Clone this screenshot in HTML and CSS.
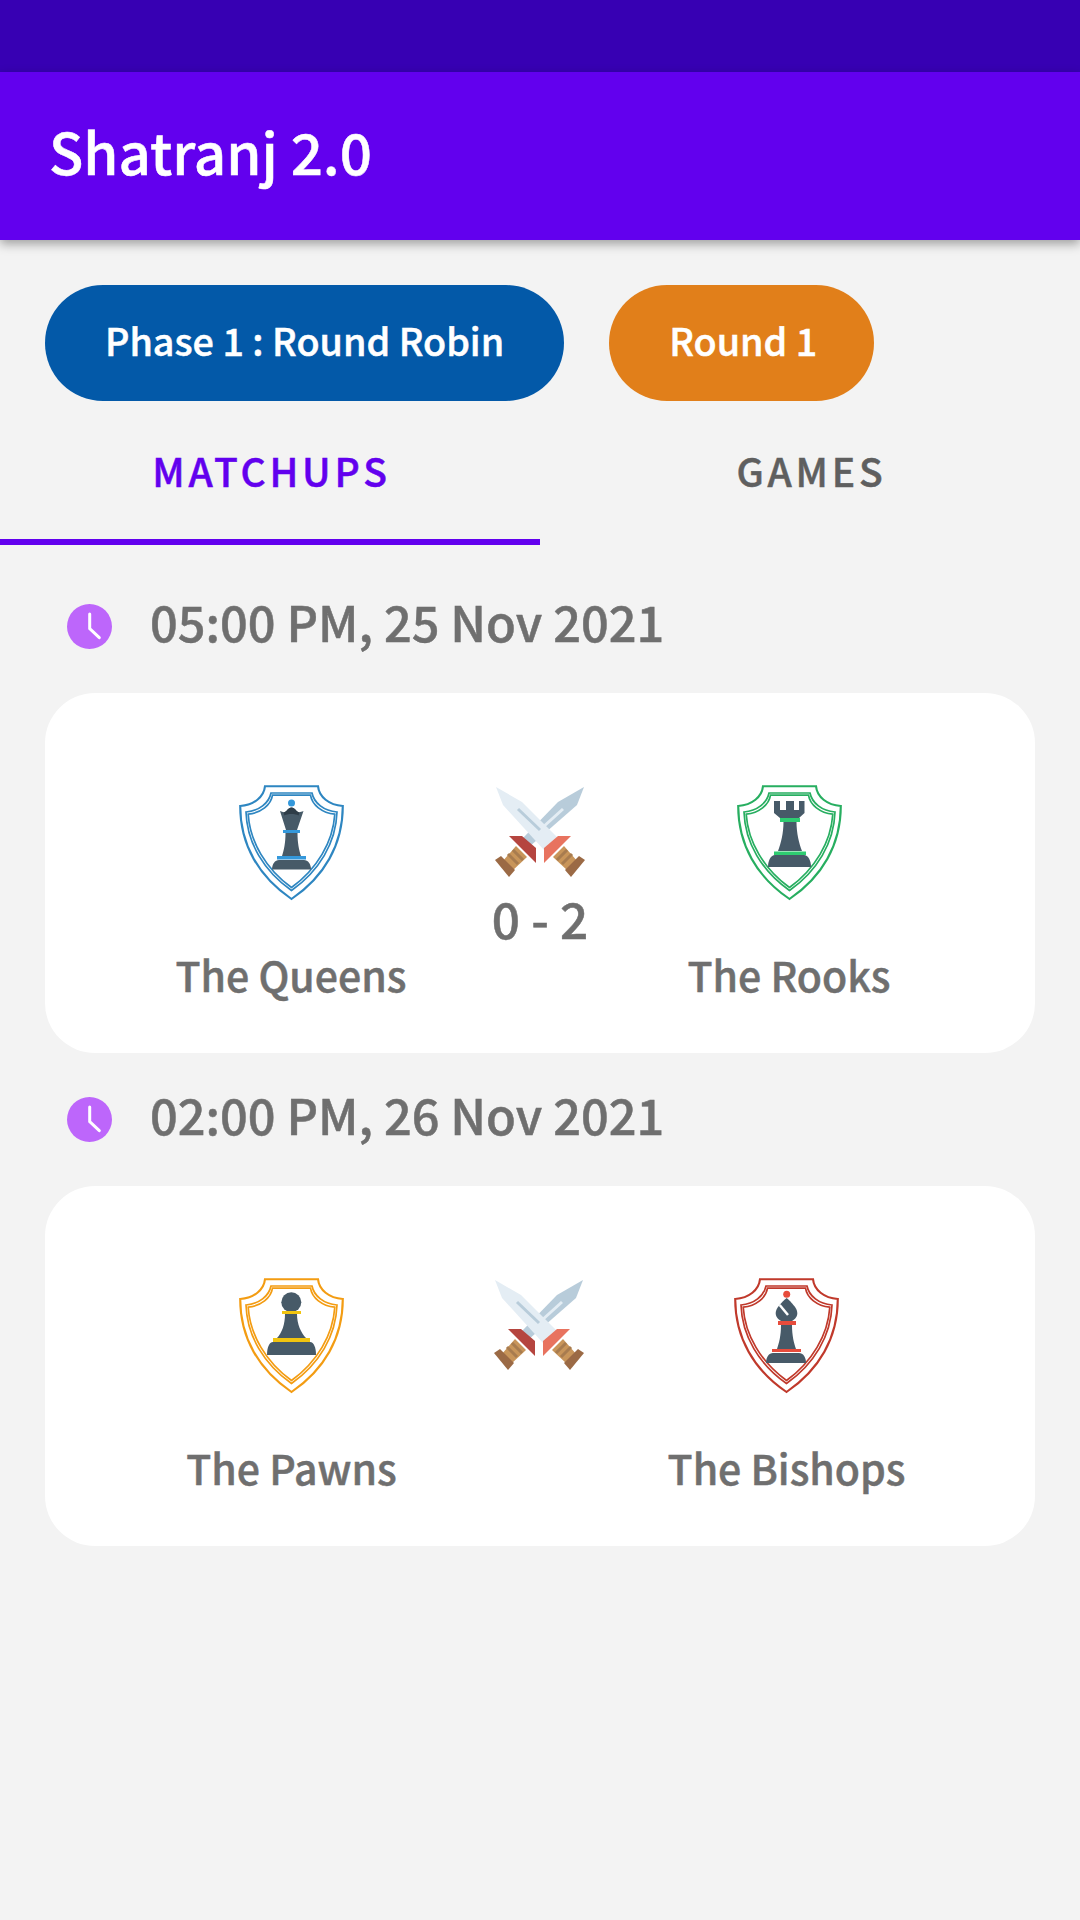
FILE: index.html
```html
<!DOCTYPE html>
<html lang="en">
<head>
    <meta charset="UTF-8">
    <meta name="viewport" content="width=device-width, initial-scale=1.0">
    <title>Shatranj 2.0</title>
    <link rel="stylesheet" href="styles.css">
</head>
<body>

<svg class="sprites" xmlns="http://www.w3.org/2000/svg">
    <symbol id="shield" viewBox="0 0 105 116">
        <path fill="none" stroke="currentColor" stroke-width="2.100" d="M26 1.200H79C80 12 90 20 103.800 21C103.800 60 85 92 52.500 114C20 92 1.200 60 1.200 21C15 20 25 12 26 1.200Z"/>
        <path fill="none" stroke="currentColor" stroke-width="1.700" d="M32 8H73C75 18 85 26 98 27C97 58 80 86 52.500 105.500C25 86 8 58 7 27C20 26 30 18 32 8Z"/>
        <path fill="none" stroke="currentColor" stroke-width="1.700" d="M33.500 10.200H71.500C73 20 83 28 95.800 29.200C94 57 78 84 52.500 102.500C27 84 11 57 9.200 29.200C22 28 32 20 33.500 10.200Z"/>
    </symbol>
    <symbol id="swords" viewBox="15 17 90 90">
        <path fill="#b8ccda" d="M104 17L78 32L43 68L49 77L97 35Z"/>
        <path fill="none" stroke="#e4edf4" stroke-width="3" d="M83 39L62 58"/>
        <path fill="#e4edf4" d="M16 17L42 32L79 69L64 80L23 35Z"/>
        <path fill="none" stroke="#b8ccda" stroke-width="3" d="M38 39L60 60"/>
        <path fill="#c8955a" d="M84 76L73 87L89 102L98 92Z"/>
        <path fill="none" stroke="#a87c4f" stroke-width="3" d="M92 84L82 94M87 80L77 90"/>
        <path fill="#9b6a45" d="M105 90L99 86L85 100L91 107Z"/>
        <path fill="#e8735f" d="M91 66H78L64 78V93Z"/>
        <path fill="#c8955a" d="M36 76L47 87L31 102L22 92Z"/>
        <path fill="none" stroke="#a87c4f" stroke-width="3" d="M28 84L38 94M33 80L43 90"/>
        <path fill="#9b6a45" d="M15 90L21 86L35 100L29 107Z"/>
        <path fill="#b5453f" d="M29 66H42L56 78V93Z"/>
    </symbol>
    <symbol id="clock" viewBox="0 0 45 45">
        <circle cx="22.500" cy="22.500" r="22.500" fill="#bd66fb"/>
        <path fill="none" stroke="#fff" stroke-width="3" stroke-linecap="round" d="M22.700 10V24.700L32.300 33.700"/>
    </symbol>
</svg>

<header class="status-bar"></header>
<div class="app-bar">
    <h1>Shatranj 2.0</h1>
</div>

<div class="pills">
    <span class="pill pill-phase">Phase 1 : Round Robin</span>
    <span class="pill pill-round">Round 1</span>
</div>

<div class="tabs">
    <div class="tab active">MATCHUPS</div>
    <div class="tab">GAMES</div>
</div>

<main class="matchups">
    <div class="date-row">
        <svg class="clock-icon"><use href="#clock"/></svg>
        <span>05:00 PM, 25 Nov 2021</span>
    </div>
    <div class="card">
        <div class="team">
            <svg class="crest" viewBox="0 0 105 116">
                <use href="#shield" width="105" height="116" color="#2e86c1"/>
                <circle cx="52.500" cy="18" r="3.500" fill="#3498db"/>
                <path fill="#475a68" d="M41 26C44 27.500 46 27.500 47.500 26C49 24 51 22.500 52.500 22.500C54 22.500 56 24 57.500 26C59 27.500 61 27.500 64.500 26L58 45H47Z"/>
                <path fill="#2f3d48" d="M44.500 27.500C47 27.500 49 22.500 52.500 22.500C56 22.500 58 27.500 60.500 27.500L59.500 30.500C57 28.500 48 28.500 45.500 30.500Z"/>
                <path fill="#475a68" d="M46.500 48H58.500C58.500 58 60 65 62 71H43C45 65 46.500 58 46.500 48Z"/>
                <path fill="#475a68" d="M33 84.500C33 79 36 75 40 75H65C69 75 72 79 72 84.500Z"/>
                <path fill="#3498db" d="M44 45H61V48H44ZM38 71H67V74.500H38Z"/>
            </svg>
            <div class="team-name">The Queens</div>
        </div>
        <div class="versus">
            <svg class="swords-icon"><use href="#swords"/></svg>
            <div class="score">0 - 2</div>
        </div>
        <div class="team">
            <svg class="crest" viewBox="0 0 105 116">
                <use href="#shield" width="105" height="116" color="#27ae60"/>
                <path fill="#475a68" d="M37 16H43V25H49V16H57V25H62V16H67.500V28L62 33H43L37 28Z"/>
                <path fill="#475a68" d="M46.500 37H59.500C59.500 48 62 58 65 66H41C44 58 46.500 48 46.500 37Z"/>
                <path fill="#475a68" d="M31 82C31 75 34 70 38 70H67C71 70 74 75 74 82Z"/>
                <path fill="#2ecc71" d="M43 33H63V37H43ZM37 66.500H69V70H37Z"/>
            </svg>
            <div class="team-name">The Rooks</div>
        </div>
    </div>

    <div class="date-row">
        <svg class="clock-icon"><use href="#clock"/></svg>
        <span>02:00 PM, 26 Nov 2021</span>
    </div>
    <div class="card card-second">
        <div class="team">
            <svg class="crest" viewBox="0 0 105 116">
                <use href="#shield" width="105" height="116" color="#f39c12"/>
                <circle cx="52.300" cy="24.300" r="10" fill="#475a68"/>
                <path fill="#475a68" d="M46 36H58C58 46 62 55 67 60H38C43 55 46 46 46 36Z"/>
                <path fill="#475a68" d="M28 77C28 70 30 64 34 64H71C75 64 77 70 77 77Z"/>
                <path fill="#f1c40f" d="M43 33H62V36H43ZM34 60H71V64H34Z"/>
            </svg>
            <div class="team-name">The Pawns</div>
        </div>
        <div class="versus">
            <svg class="swords-icon"><use href="#swords"/></svg>
        </div>
        <div class="team">
            <svg class="crest" viewBox="0 0 105 116">
                <use href="#shield" width="105" height="116" color="#c0392b"/>
                <circle cx="52.700" cy="16.300" r="3.500" fill="#e74c3c"/>
                <path fill="#475a68" d="M52.700 20C57 24 63.300 30 63.300 35C63.300 39 61 41 58 43H47C44 41 41.700 39 41.700 35C41.700 30 48 24 52.700 20Z"/>
                <path fill="none" stroke="#fff" stroke-width="2.500" d="M45.700 27L54 37"/>
                <path fill="#475a68" d="M47 47H58C58 58 60 65 62 71H43C45 65 47 58 47 47Z"/>
                <path fill="#475a68" d="M32 85C32 79 35 75 39 75H65C69 75 72 79 72 85Z"/>
                <path fill="#e74c3c" d="M44 43H62V47H44ZM38 71H67V74H38Z"/>
            </svg>
            <div class="team-name">The Bishops</div>
        </div>
    </div>
</main>

</body>
</html>
```

FILE: styles.css
```css
* {
    margin: 0;
    padding: 0;
    box-sizing: border-box;
}

html, body {
    width: 1080px;
    height: 1920px;
    overflow: hidden;
    background: #f3f3f3;
    font-family: "Noto Sans CJK JP", "Noto Sans", sans-serif;
    font-weight: 500;
    -webkit-text-stroke: 0.5px currentColor;
}

.sprites {
    display: none;
}

.status-bar {
    height: 72px;
    background: #3700b3;
}

.app-bar {
    height: 168px;
    padding: 0 0 12px 49px;
    display: flex;
    align-items: center;
    background: #6200ee;
    box-shadow: 0 4px 10px rgba(0, 0, 0, 0.35);
}

.app-bar h1 {
    font-size: 56.500px;
    font-weight: 500;
    color: #fff;
}

.pills {
    display: flex;
    gap: 45px;
    padding: 45px 45px 0;
}

.pill {
    height: 116px;
    padding: 0 60px 8px;
    border-radius: 58px;
    display: flex;
    align-items: center;
    font-size: 37.700px;
    color: #fff;
}

.pill-phase {
    background: #0359a8;
}

.pill-round {
    padding-right: 57px;
    background: #e17f1a;
}

.tabs {
    display: flex;
    height: 144px;
}

.tab {
    width: 540px;
    padding: 41px 0 0 3px;
    text-align: center;
    font-size: 39px;
    letter-spacing: 3.800px;
    color: #5f5f5f;
}

.tab.active {
    color: #6200ee;
    border-bottom: 6px solid #6200ee;
}

.matchups {
    padding: 15px 45px 0;
}

.date-row {
    height: 133px;
    padding-left: 22px;
    display: flex;
    align-items: center;
    gap: 38px;
    font-size: 48.700px;
    color: #6f6f6f;
}

.date-row span {
    margin-bottom: 11px;
}

.clock-icon {
    width: 45px;
    height: 45px;
}

.card {
    height: 360px;
    padding: 92px 42px 0;
    display: grid;
    grid-template-columns: 1fr 90px 1fr;
    background: #fff;
    border-radius: 50px;
}

.card-second {
    padding: 92px 46px 0 44px;
}

.team {
    display: flex;
    flex-direction: column;
    align-items: center;
}

.crest {
    width: 105px;
    height: 116px;
}

.team-name {
    margin-top: 43px;
    font-size: 41px;
    color: #6f6f6f;
    white-space: nowrap;
}

.versus {
    display: flex;
    flex-direction: column;
    align-items: center;
    padding-top: 2px;
}

.swords-icon {
    width: 90px;
    height: 90px;
    flex: none;
}

.score {
    font-size: 49.500px;
    line-height: 82px;
    color: #6f6f6f;
    white-space: nowrap;
}
```
